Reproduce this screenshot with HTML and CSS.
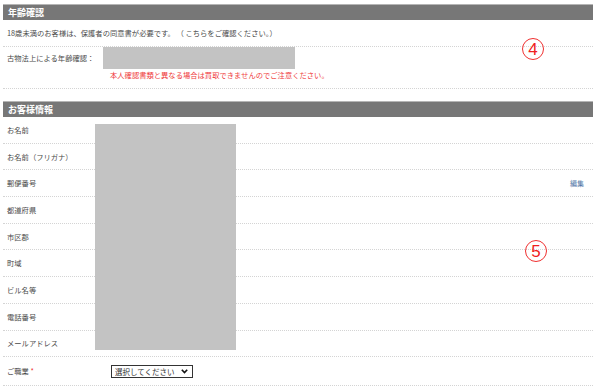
FILE: index.html
```html
<!DOCTYPE html>
<html lang="ja">
<head>
    <meta charset="UTF-8">
    <title>お客様情報</title>
    <link rel="stylesheet" href="styles.css">
</head>
<body>
    <div class="form">
        <div class="section age">
            <h2 class="section-title">年齢確認</h2>
            <div class="row notice">18歳未満のお客様は、保護者の同意書が必要です。 （ こちらをご確認ください。）</div>
            <div class="row check">
                <div class="check-label">古物法上による年齢確認：</div>
                <div class="check-body">
                    <div class="mask"></div>
                    <div class="note">本人確認書類と異なる場合は買取できませんのでご注意ください。</div>
                </div>
            </div>
            <span class="mark mark-4">4</span>
        </div>

        <div class="section customer">
            <h2 class="section-title">お客様情報</h2>
            <div class="row field"><span class="label">お名前</span></div>
            <div class="row field"><span class="label">お名前（フリガナ）</span></div>
            <div class="row field"><span class="label">郵便番号</span><a class="edit" href="#">編集</a></div>
            <div class="row field"><span class="label">都道府県</span></div>
            <div class="row field"><span class="label">市区郡</span></div>
            <div class="row field"><span class="label">町域</span></div>
            <div class="row field"><span class="label">ビル名等</span></div>
            <div class="row field"><span class="label">電話番号</span></div>
            <div class="row field"><span class="label">メールアドレス</span></div>
            <div class="row field job">
                <span class="label">ご職業 <span class="req">*</span></span>
                <div class="select-wrap">
                    <select class="select">
                        <option>選択してください</option>
                    </select>
                    <svg class="chevron" width="7" height="5" viewBox="0 0 7 5">
                        <path d="M0.8 0.8 L3.5 3.6 L6.2 0.8" fill="none" stroke="#111" stroke-width="1.6"/>
                    </svg>
                </div>
            </div>
            <div class="mask mask-big"></div>
            <span class="mark mark-5">5</span>
        </div>
    </div>
</body>
</html>
```

FILE: styles.css
```css
body {
    margin: 0;
    background-color: #fff;
    font-family: "Noto Sans CJK JP", "Noto Sans", sans-serif;
    font-size: 7.3px;
    color: #4a4a4a;
}
.form {
    width: 590px;
    margin-left: 3px;
}
.section {
    position: relative;
}
.age {
    padding-top: 4px;
}
.customer {
    margin-top: 12px;
}
.section-title {
    margin: 0;
    height: 15px;
    line-height: 15px;
    padding-left: 5px;
    background-color: #777;
    border-top: 1px solid #b5b5b5;
    color: #fff;
    font-size: 9px;
    font-weight: bold;
}
.row {
    border-bottom: 1px dotted #d4d4d4;
    box-sizing: border-box;
}
.notice {
    height: 27px;
    line-height: 27px;
    padding-left: 4px;
}
.check {
    display: flex;
    padding: 0 0 7px 4px;
}
.check-label {
    width: 96px;
    line-height: 22px;
}
.mask {
    background-color: #c3c3c3;
}
.check-body .mask {
    width: 192px;
    height: 22px;
}
.note {
    padding-left: 7px;
    margin-top: 1px;
    line-height: 11px;
    color: #ef3b3b;
}
.field {
    display: flex;
    align-items: center;
    height: 26.7px;
    padding: 0 5px 0 4px;
}
.label {
    width: 104px;
}
.req {
    color: #e33;
}
.edit {
    margin-left: auto;
    margin-right: 4px;
    color: #5479a8;
    text-decoration: none;
    font-size: 7px;
}
.job {
    height: 29px;
}
.select-wrap {
    position: relative;
    width: 82px;
    height: 13px;
}
.select {
    -webkit-appearance: none;
    appearance: none;
    width: 82px;
    height: 13px;
    margin: 0;
    padding: 0 0 0 3px;
    border: 1px solid #333;
    border-radius: 0;
    background-color: #fff;
    font-family: inherit;
    font-size: 7.5px;
    line-height: 11px;
    color: #333;
}
.chevron {
    position: absolute;
    right: 5px;
    top: 4px;
}
.mask-big {
    position: absolute;
    left: 92px;
    top: 23px;
    width: 141px;
    height: 226px;
}
.mark {
    position: absolute;
    width: 22px;
    height: 22px;
    border: 1px solid #f03030;
    border-radius: 50%;
    box-sizing: border-box;
    color: #f02020;
    font-family: "Liberation Sans", sans-serif;
    font-size: 17px;
    line-height: 21px;
    text-align: center;
}
.mark-4 {
    left: 519px;
    top: 38px;
}
.mark-5 {
    left: 522px;
    top: 139px;
}
```
